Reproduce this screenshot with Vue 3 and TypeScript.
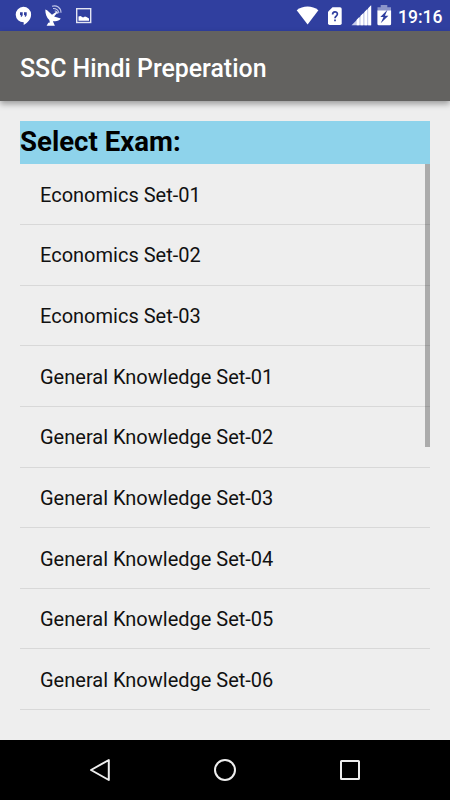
<script setup lang="ts">
const exams: string[] = [
  'Economics Set-01',
  'Economics Set-02',
  'Economics Set-03',
  'General Knowledge Set-01',
  'General Knowledge Set-02',
  'General Knowledge Set-03',
  'General Knowledge Set-04',
  'General Knowledge Set-05',
  'General Knowledge Set-06',
]
</script>

<template>
  <div class="screen">
    <div class="status">
      <svg class="status-icons" width="110" height="31" viewBox="0 0 110 31">
        <path fill="#fff" d="M23.300 6.700a7.800 7.800 0 0 1 7.800 7.800c0 4.500-3.100 8-7.400 10.500v-2.700a7.800 7.800 0 0 1-.4-15.600z" />
        <path fill="#303f9f" d="M20 12.200h2.700v3l-1 1.600h-1l.5-1.600H20zM24 12.200h2.700v3l-1 1.600h-1l.5-1.600H24z" />
        <path fill="#fff" d="M45.300 9.500l1.800.8 4.900 4.400 4.700-3.100.8 1-3.400 4 6.700 1.900c-1.500 2.300-4.700 3.200-7.700 2.500l.3 1.500 1.500 3.200h-8.300l1.700-3 1.600-.3-.6-2.400c-2.700-2.300-4-6-4-10.500z" />
        <path fill="none" stroke="#c5cae9" stroke-width="1.100" d="M54.700 11a3 3 0 0 1 3 2.600M53 8.500a6 6 0 0 1 6 4.600M52 6.300c4.500-1.500 9 1.200 9 6.500" />
        <rect x="76.700" y="8.700" width="14" height="13.800" fill="none" stroke="#e3e5f2" stroke-width="1.400" />
        <path fill="#fff" d="M78.500 20.700v-4.200l2-.5 2.500 1.500 2-1 1.500.5 2.500 1.500v2.200z" />
      </svg>
      <svg class="status-icons" width="104" height="31" viewBox="290 0 104 31">
        <path fill="#fff" d="M296.700 10.300c6.200-5 15.500-5 21.700 0L307.600 24.500z" />
        <path fill="#fff" d="M332.500 7.200h7.500q1.700 0 1.700 1.700v14.400q0 1.700-1.700 1.700h-10.300q-1.700 0-1.700-1.700V11.700z" />
        <path fill="none" stroke="#303f9f" stroke-width="1.700" d="M332.600 14.500c0-3.400 4.800-3.300 4.800-.4 0 2-2.400 2.200-2.400 4.200M335 19.500v1.700" />
        <path fill="#c5cae9" d="M351.500 25.200L371.200 5.500v19.700z" />
        <path fill="#fff" d="M356.700 25.200v-5.500l2.600-2.600v8.100zM360.600 25.200v-9.400l2.600-2.600v12zM364.500 25.200V11.900l2.600-2.600v15.900zM368.200 25.200V8.200l2.900-2.900v19.900z" />
        <path fill="#8c95ca" d="M380.700 5h6.600v2.300h3.700v3.900H377.500V7.300h3.200z" />
        <path fill="#fff" d="M377.400 10.500h13.700v13.300q0 1.500-1.400 1.500h-10.900q-1.400 0-1.400-1.500z" />
        <path fill="#303f9f" d="M387.500 9.800l-7.200 7.200h3.200l-2.800 6.200 7.700-7.500h-3.500z" />
      </svg>
      <span class="clock">19:16</span>
    </div>
    <header class="appbar"><h1>SSC Hindi Preperation</h1></header>
    <main>
      <h2>Select Exam:</h2>
      <div class="list">
        <ul>
          <li v-for="exam in exams" :key="exam"><span>{{ exam }}</span></li>
        </ul>
        <i class="thumb"></i>
      </div>
    </main>
    <nav>
      <svg width="26" height="26" viewBox="0 0 26 26"><path d="M4 13L21.800 3V23z" /></svg>
      <svg width="26" height="26" viewBox="0 0 26 26"><circle cx="13" cy="13" r="10" /></svg>
      <svg width="26" height="26" viewBox="0 0 26 26"><rect x="4" y="4" width="18" height="18" rx=".5" /></svg>
    </nav>
  </div>
</template>

<style>
body {
  margin: 0;
  background: #eee;
}
</style>

<style scoped>
.screen {
  width: 450px;
  height: 800px;
  display: flex;
  flex-direction: column;
  overflow: hidden;
  background: #eee;
  color: #111;
  font-family: Roboto, sans-serif;
}
.status {
  height: 31px;
  flex: none;
  display: flex;
  background: #303f9f;
}
.status-icons {
  flex: none;
}
.status-icons + .status-icons {
  margin-left: 180px;
}
.clock {
  margin-left: 4px;
  color: #fff;
  font-size: 17.5px;
  font-weight: 500;
  line-height: 34px;
}
.appbar {
  height: 70px;
  flex: none;
  padding-left: 20px;
  background: #636260;
  box-shadow: 0 3px 6px rgba(0, 0, 0, 0.35);
}
h1 {
  margin: 0;
  color: #fff;
  font-size: 24.9px;
  font-weight: 500;
  line-height: 75px;
}
main {
  flex: 1;
  padding: 20.300px 20px 0;
}
h2 {
  height: 43px;
  margin: 0;
  background: #8ed3eb;
  color: #000;
  font-size: 27.600px;
  font-weight: 700;
  line-height: 41px;
}
.list {
  position: relative;
}
ul {
  margin: 0;
  padding: 0;
  list-style: none;
}
li {
  display: flow-root;
  height: 60.650px;
  box-sizing: border-box;
  padding-left: 20px;
  border-bottom: 1px solid #d8d8d8;
  font-size: 20px;
  line-height: 62px;
}
li span {
  display: block;
  margin-top: -0.5px;
}
.thumb {
  position: absolute;
  top: 0;
  right: 0;
  width: 5px;
  height: 283px;
  background: rgba(0, 0, 0, 0.28);
}
nav {
  height: 60px;
  flex: none;
  display: flex;
  align-items: center;
  justify-content: space-between;
  box-sizing: border-box;
  padding: 0 87px;
  background: #000;
}
nav svg {
  fill: none;
  stroke: #eee;
  stroke-width: 2;
  stroke-linejoin: round;
}
</style>
